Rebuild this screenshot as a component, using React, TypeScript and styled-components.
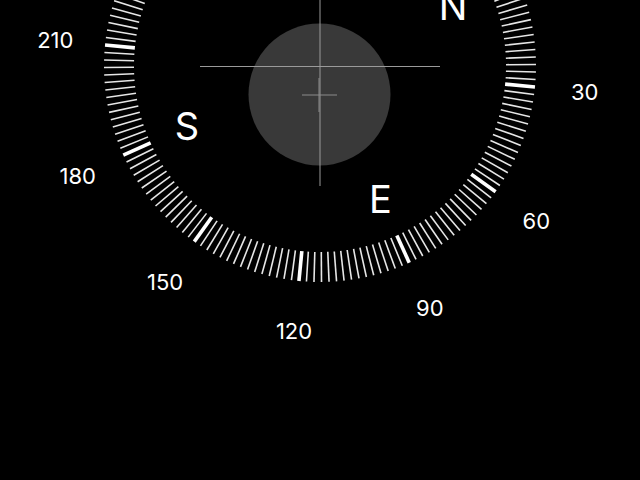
import React from 'react';
import styled, { createGlobalStyle } from 'styled-components';

const GlobalStyle = createGlobalStyle`
  html, body {
    margin: 0;
    padding: 0;
    background: #000;
  }
`;

const Screen = styled.div`
  width: 640px;
  height: 480px;
  background: #000;
  overflow: hidden;
  display: flex;
`;

const Dial = styled.svg`
  display: block;
  width: 640px;
  height: 480px;
`;

const Tick = styled.line<{ $major: boolean }>`
  stroke: #fff;
  stroke-width: ${(p) => (p.$major ? 3.6 : 1.6)};
  opacity: ${(p) => (p.$major ? 1 : 0.9)};
`;

const Label = styled.text<{ $big?: boolean }>`
  fill: #fff;
  font-family: Inter, 'Liberation Sans', sans-serif;
  font-size: ${(p) => (p.$big ? '38px' : '22px')};
  font-weight: 400;
`;

const Hair = styled.line<{ $tone: string }>`
  stroke: ${(p) => p.$tone};
  stroke-width: 1;
`;

const Level = styled.circle`
  fill: #393939;
`;

// centre of the rotating dial
const CX = 320;
const CY = 66;
// where heading 0 points on screen (deg, clockwise from +x)
const OFFSET = -24.4;

const rad = (deg: number) => ((deg + OFFSET) * Math.PI) / 180;
const pt = (deg: number, r: number) => ({
  x: CX + r * Math.cos(rad(deg)),
  y: CY + r * Math.sin(rad(deg)),
});

// only labels that land on the visible part of the dial
const onScreen = (p: { x: number; y: number }) => p.y > -8 && p.x > -20 && p.x < 660;

const ticks = Array.from({ length: 180 }, (_, i) => i * 2);
const numbers = Array.from({ length: 12 }, (_, i) => i * 30)
  .map((d) => ({ d, p: pt(d, 266) }))
  .filter((n) => onScreen(n.p));
const cardinals = [
  { deg: 0, text: 'N' },
  { deg: 90, text: 'E' },
  { deg: 180, text: 'S' },
  { deg: 270, text: 'W' },
]
  .map((c) => ({ ...c, p: pt(c.deg, 146) }))
  .filter((c) => onScreen(c.p));

function App() {
  return (
    <Screen>
      <GlobalStyle />
      <Dial viewBox="0 0 640 480">
        {ticks.map((d) => {
          const a = pt(d, 186);
          const b = pt(d, 216);
          return <Tick key={d} $major={d % 30 === 0} x1={a.x} y1={a.y} x2={b.x} y2={b.y} />;
        })}
        {numbers.map(({ d, p }) => (
          <Label key={d} x={p.x} y={p.y + 8} textAnchor="middle">
            {d}
          </Label>
        ))}
        {cardinals.map((c) => (
          <Label key={c.text} $big x={c.p.x} y={c.p.y + 13.8} textAnchor="middle">
            {c.text}
          </Label>
        ))}
        <Level cx={319.5} cy={94.5} r={71} />
        <Hair $tone="#9a9a9a" x1={200} y1={66.5} x2={440} y2={66.5} />
        <Hair $tone="#9a9a9a" x1={320} y1={0} x2={320} y2={186} />
        <Hair $tone="#8c8c8c" x1={302} y1={95} x2={337} y2={95} />
        <Hair $tone="#8c8c8c" x1={319} y1={78} x2={319} y2={112} />
      </Dial>
    </Screen>
  );
}

export default App;
